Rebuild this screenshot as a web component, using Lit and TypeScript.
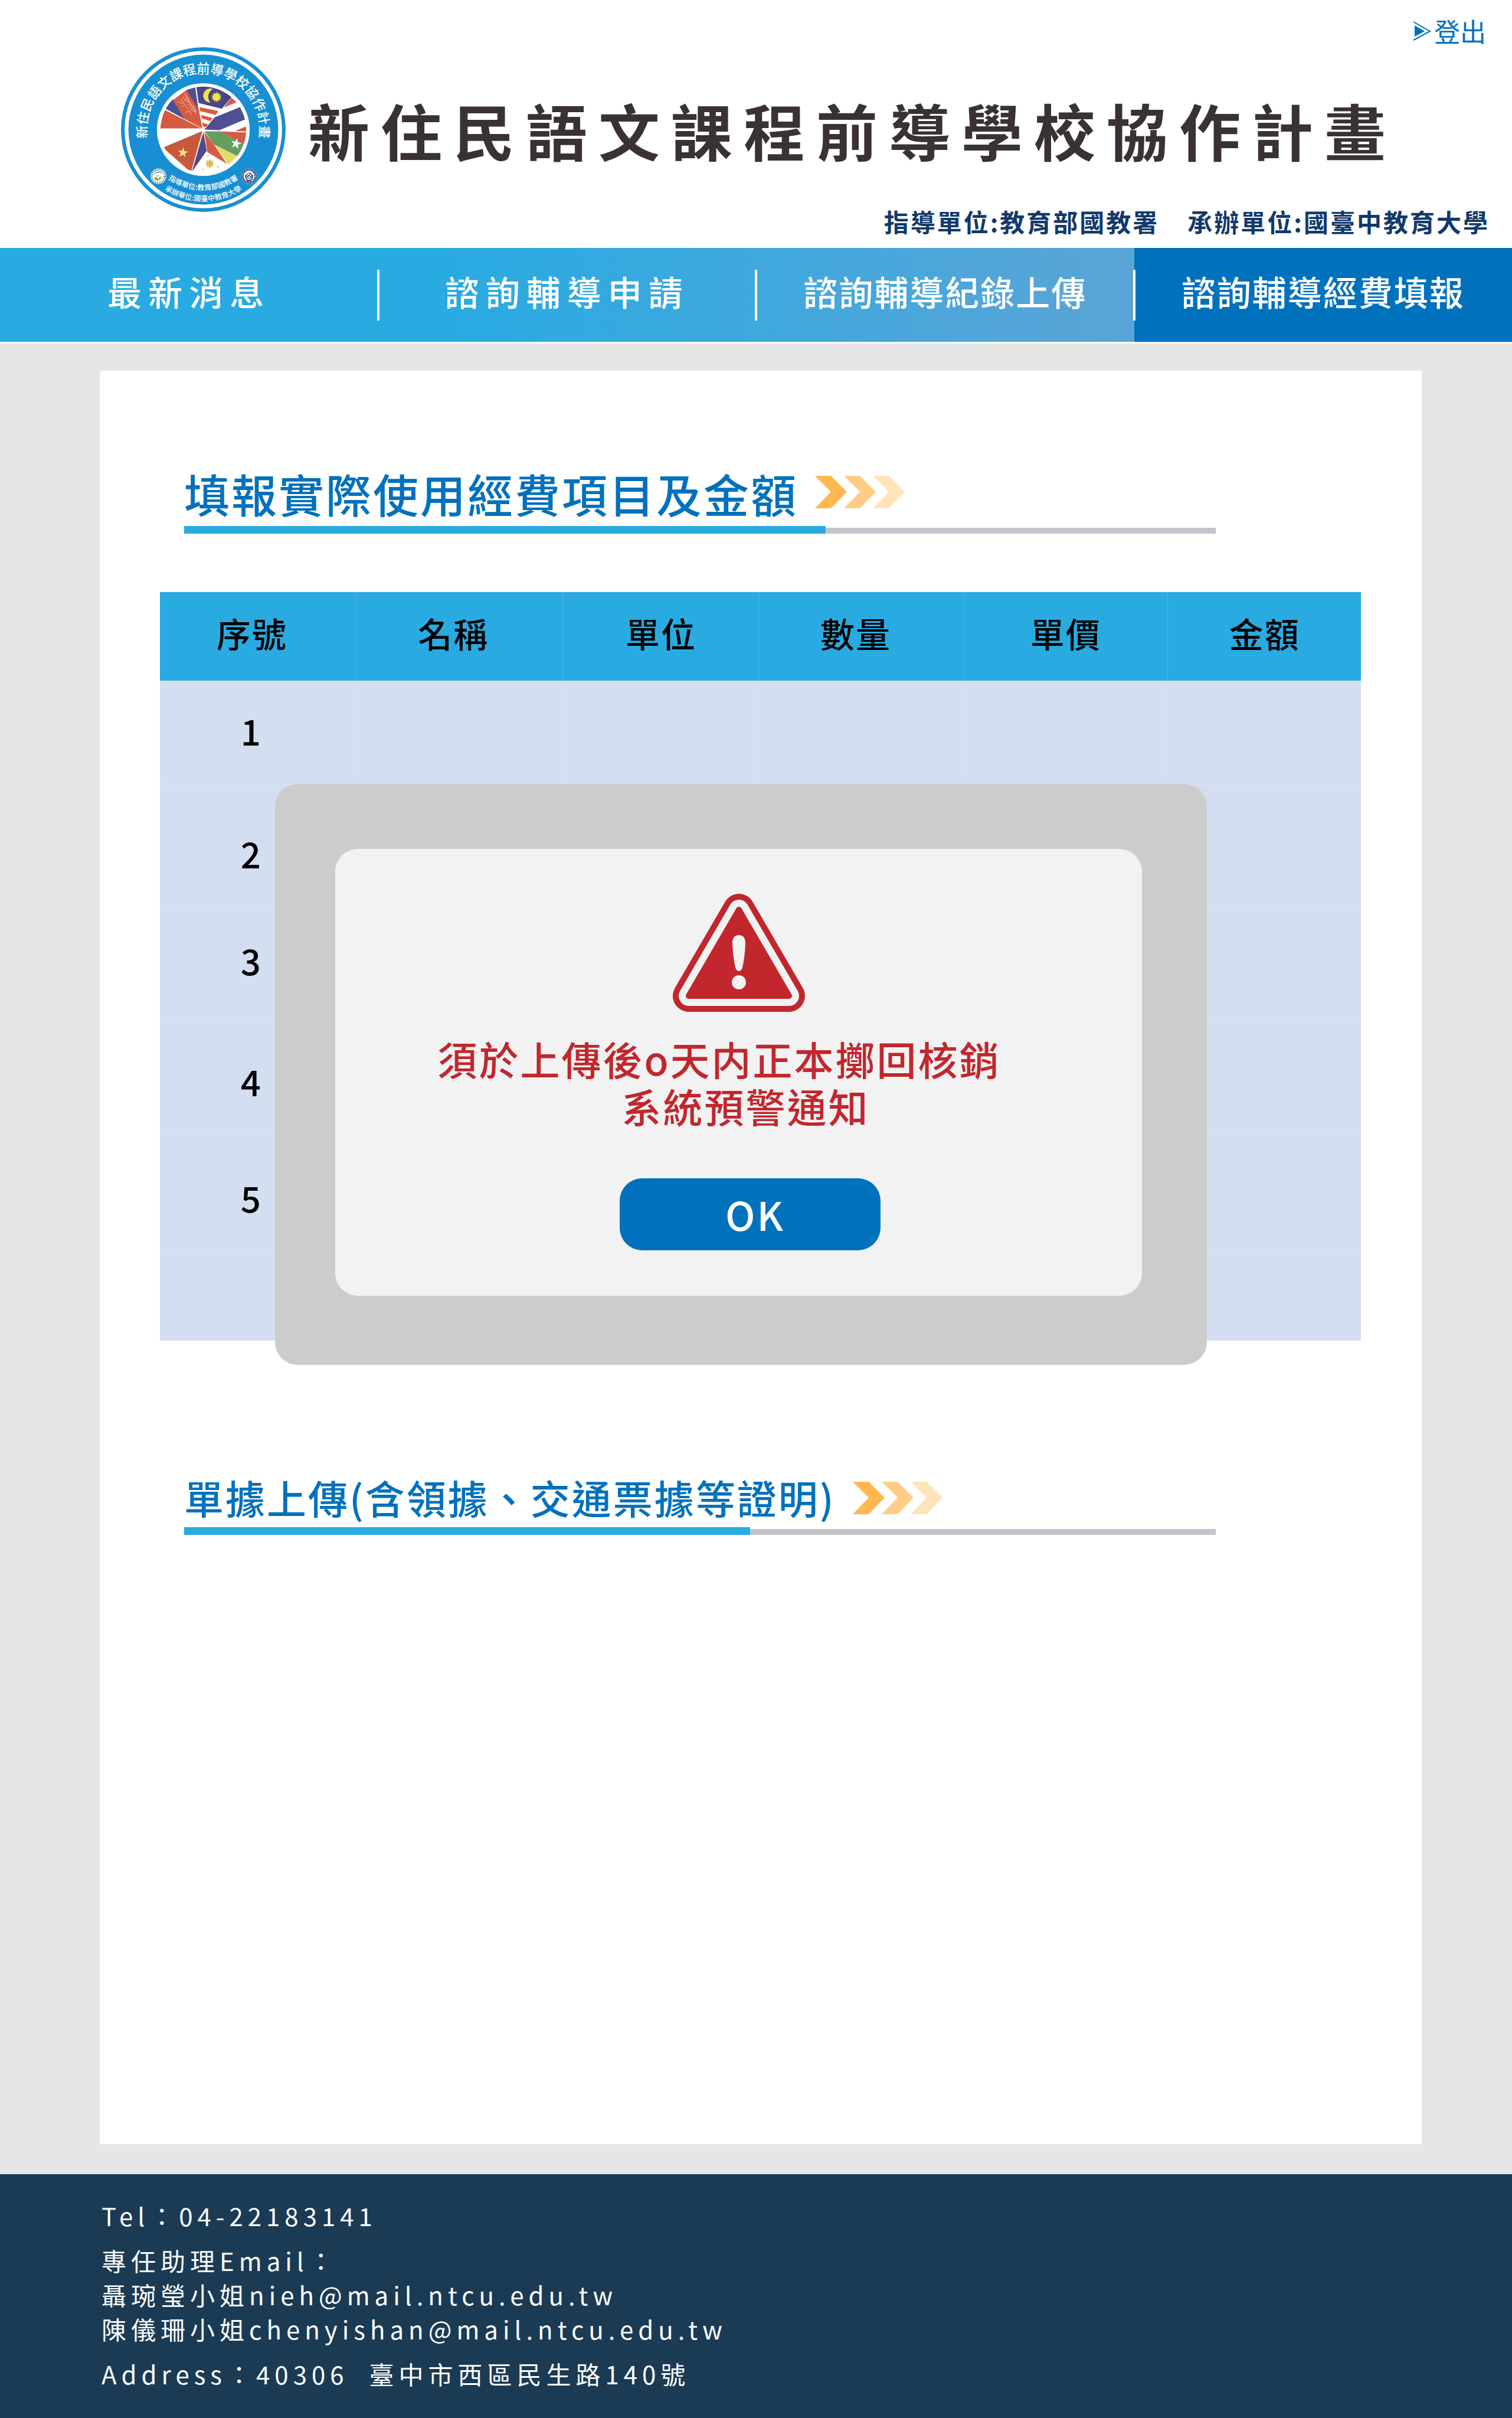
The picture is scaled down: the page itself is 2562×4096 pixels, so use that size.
import { LitElement, html, svg, css, nothing } from "lit";
import { customElement, property, state } from "lit/decorators.js";
import { classMap } from "lit/directives/class-map.js";

interface NavItem {
  label: string;
  wide: boolean;
  active: boolean;
}

const NAV: NavItem[] = [
  { label: "最新消息", wide: true, active: false },
  { label: "諮詢輔導申請", wide: true, active: false },
  { label: "諮詢輔導紀錄上傳", wide: false, active: false },
  { label: "諮詢輔導經費填報", wide: false, active: true },
];

const COLUMNS = ["序號", "名稱", "單位", "數量", "單價", "金額"];
const ROWS = ["1", "2", "3", "4", "5", ""];

/** Points of a star polygon with alternating outer and inner radii. */
function star(cx: number, cy: number, outer: number, inner: number, tips: number, turn = 0): string {
  const pts: string[] = [];
  for (let i = 0; i < tips * 2; i++) {
    const r = i % 2 === 0 ? outer : inner;
    const a = ((turn - 90 + (i * 180) / tips) * Math.PI) / 180;
    pts.push(`${Math.round(cx + r * Math.cos(a))},${Math.round(cy + r * Math.sin(a))}`);
  }
  return pts.join(" ");
}

@customElement("project-emblem")
export class ProjectEmblem extends LitElement {
  static styles = css`
    :host {
      display: block;
    }
    svg {
      display: block;
      width: 100%;
      height: 100%;
    }
    text {
      font-family: "Noto Sans CJK TC", sans-serif;
      fill: #fff;
    }
    .ring-title {
      font-size: 86px;
      font-weight: 500;
    }
    .ring-note {
      font-size: 48px;
      font-weight: 500;
    }
  `;

  render() {
    return html`
      <svg viewBox="53 43 1090 1090" role="img" aria-label="計畫標誌">
        <defs>
          <clipPath id="disc"><circle cx="598" cy="588" r="284" /></clipPath>
          <path id="arc-top" d="M598 962 A374 374 0 0 1 598 214 A374 374 0 0 1 598 962" />
          <path id="arc-mid" d="M197 588 A401 401 0 0 0 999 588" />
          <path id="arc-low" d="M124 588 A474 474 0 0 0 1072 588" />
        </defs>
        <circle cx="598" cy="588" r="545" fill="#188fd2" />
        <circle cx="598" cy="588" r="521" fill="#fff" />
        <circle cx="598" cy="588" r="496" fill="#188fd2" />
        <circle cx="598" cy="588" r="307" fill="#fff" />
        <g clip-path="url(#disc)">
          <polygon points="340,445 395,380 476,520" fill="#4f5094" />
          <polygon points="397,393 487,325 568,455 592,580 476,520" fill="#d55b42" />
          <polygon points="485,325 543,300 566,455" fill="#504f92" />
          <g stroke="#f0b3aa" stroke-width="6" fill="none" stroke-dasharray="9 3">
            <path d="M474 348 L552 478" />
            <path d="M483 358 L508 408" />
            <path d="M462 376 L505 396 M470 392 L508 410 M500 422 L545 440 M508 440 L552 458 M514 456 L552 474" />
            <path d="M450 385 L520 488" stroke-width="4" />
            <path d="M430 402 L468 418 M452 436 L488 424 M478 474 L512 466" stroke-width="4" />
          </g>
          <polygon points="550,290 640,290 790,368 720,450 567,412" fill="#494587" />
          <path d="M661 319 A47 47 0 1 0 645 410 A60 60 0 0 1 661 319" fill="#f2e24b" />
          <polygon points=${star(685, 373, 36, 22, 14)} fill="#f2e24b" />
          <g fill="#d55b42">
            <polygon points="573,440 697,466 680,491 578,466" />
            <polygon points="583,491 661,512 643,531 588,515" />
            <polygon points="590,541 630,554 614,572 596,568" />
            <polygon points="784,378 820,406 733,442" />
            <polygon points="890,563 890,601 810,597" />
          </g>
          <polygon points="850,436 880,519 705,592 605,588 673,507" fill="#4f5094" />
          <polygon points="705,600 890,608 880,692" fill="#d55b42" />
          <polygon points="607,600 705,600 890,696 840,773 668,687" fill="#649e5f" />
          <polygon points="670,686 835,770 768,825" fill="#e4dc6a" />
          <polygon points=${star(815, 681, 38, 14, 5, 12)} fill="#fff" />
          <polygon points="598,605 621,728 522,868" fill="#524a88" />
          <polygon points="604,603 672,692 754,815 625,737" fill="#d55b42" />
          <polygon points=${star(640, 814, 32, 19, 8)} fill="#e0bf52" />
          <polygon points=${star(628, 761, 9, 4, 5)} fill="#e0bf52" />
          <polygon points=${star(694, 836, 9, 4, 5, 20)} fill="#e0bf52" />
          <polygon points=${star(594, 853, 9, 4, 5)} fill="#e0bf52" />
          <polygon points="592,598 516,870 330,707" fill="#c9593b" />
          <polygon points=${star(463, 741, 36, 14, 5, 6)} fill="#f8e583" />
          <polygon points="338,455 585,580 310,580" fill="#d55b42" />
        </g>
        <text class="ring-title" text-anchor="middle">
          <textPath href="#arc-top" startOffset="50%">新住民語文課程前導學校協作計畫</textPath>
        </text>
        <text class="ring-note" text-anchor="middle">
          <textPath href="#arc-mid" startOffset="50%">指導單位:教育部國教署</textPath>
        </text>
        <text class="ring-note" text-anchor="middle">
          <textPath href="#arc-low" startOffset="50%">承辦單位:國臺中教育大學</textPath>
        </text>
        <circle cx="301" cy="897" r="51" fill="#fff" />
        <circle cx="301" cy="897" r="43" fill="none" stroke="#3c4a3c" stroke-width="9" stroke-dasharray="5 7" />
        <path d="M270 893 A32 32 0 0 1 330 884 A36 36 0 0 0 270 893" fill="#2c8fa3" />
        <path d="M334 893 A32 32 0 0 1 316 924 A44 44 0 0 0 334 893" fill="#2c8fa3" />
        <path d="M273 905 Q298 898 300 926 Q276 928 273 905 M303 925 Q298 905 318 899 Q322 918 303 925 M290 893 Q302 884 305 897 Q294 902 290 893" fill="#72b62b" />
        <circle cx="901" cy="897" r="52" fill="#fff" />
        <circle cx="901" cy="897" r="44" fill="none" stroke="#24477f" stroke-width="14" />
        <circle cx="901" cy="897" r="44" fill="none" stroke="#fff" stroke-width="6" stroke-dasharray="4 6" />
        <path d="M878 888 Q876 922 901 926 Q926 922 925 888" fill="none" stroke="#24477f" stroke-width="7" />
        <circle cx="902" cy="893" r="17" fill="none" stroke="#24477f" stroke-width="5" />
        <path d="M890 903 L912 880 M892 888 Q904 892 914 902 M888 928 L914 928" fill="none" stroke="#24477f" stroke-width="5" />
      </svg>
    `;
  }
}

@customElement("section-title")
export class SectionTitle extends LitElement {
  @property() text = "";
  @property() size: "large" | "medium" = "large";
  @property({ type: Number }) fill = 50;

  static styles = css`
    :host {
      display: block;
    }
    .line {
      display: flex;
      align-items: flex-start;
      gap: 29px;
    }
    .title {
      margin: 0;
      font-weight: 500;
      color: #0071bc;
      letter-spacing: 3px;
    }
    .large {
      font-size: 77px;
      line-height: 96px;
    }
    .medium {
      font-size: 67px;
      line-height: 88px;
    }
    .arrows {
      display: block;
      width: 152px;
      height: 55px;
      margin-top: 18px;
    }
    .rule {
      display: flex;
      align-items: flex-end;
      width: 88%;
      margin-top: 7px;
    }
    .done {
      height: 13px;
      background: #29abe2;
    }
    .rest {
      flex: 1;
      height: 10px;
      background: #c1c5ca;
    }
  `;

  render() {
    const tones = ["#ffb74f", "#ffcd86", "#ffe3ba"];
    return html`
      <div class="line">
        <h2 class=${classMap({ title: true, large: this.size === "large", medium: this.size === "medium" })}>${this.text}</h2>
        <svg class="arrows" viewBox="0 0 152 55" aria-hidden="true">
          ${tones.map((tone, i) => {
            const x = i * 49;
            return svg`<polygon points="${x},0 ${x + 27},0 ${x + 54},27 ${x + 27},55 ${x},55 ${x + 27},27" fill=${tone} />`;
          })}
        </svg>
      </div>
      <div class="rule">
        <div class="done" style="width: ${this.fill}%"></div>
        <div class="rest"></div>
      </div>
    `;
  }
}

@customElement("app-root")
export class AppRoot extends LitElement {
  @state() private alertOpen = true;

  static styles = css`
    :host {
      display: flex;
      flex-direction: column;
      min-height: 100vh;
      background: #fff;
      font-family: "Noto Sans CJK TC", sans-serif;
      font-weight: 500;
      color: #000;
    }
    a {
      color: inherit;
      text-decoration: none;
    }

    .account {
      display: flex;
      justify-content: flex-end;
      align-items: center;
      height: 80px;
      padding: 24px 44px 0 0;
      box-sizing: border-box;
    }
    .logout {
      display: flex;
      align-items: center;
      gap: 5px;
      font-size: 44px;
      font-weight: 400;
      line-height: 56px;
      color: #0071bc;
    }
    .logout-icon {
      display: block;
      width: 31px;
      height: 33px;
    }
    .brand {
      display: flex;
      align-items: center;
      gap: 38px;
      padding-left: 205px;
    }
    .emblem {
      flex: none;
      width: 279px;
      height: 279px;
    }
    .site-name {
      margin: 0;
      font-size: 104px;
      line-height: 128px;
      font-weight: 700;
      letter-spacing: 19px;
      white-space: nowrap;
      color: #3a3232;
    }
    .credits {
      display: flex;
      justify-content: flex-end;
      gap: 48px;
      padding: 0 38px 29px 0;
      font-size: 42px;
      line-height: 32px;
      font-weight: 700;
      letter-spacing: 3px;
      color: #12396a;
    }

    .nav {
      display: grid;
      grid-template-columns: repeat(4, 1fr);
      background: linear-gradient(90deg, #29abe2 0%, #29abe2 30%, #5ba4d7 75%);
      margin-bottom: 3px;
    }
    .nav-link {
      position: relative;
      display: flex;
      justify-content: center;
      align-items: center;
      height: 159px;
      padding-bottom: 14px;
      box-sizing: border-box;
      font-size: 58px;
      letter-spacing: 2px;
      color: #fff;
      white-space: nowrap;
    }
    .nav-link.wide {
      letter-spacing: 11px;
    }
    .nav-link.active {
      background: #0071bc;
    }
    .nav-link + .nav-link::before {
      content: "";
      position: absolute;
      left: -2px;
      top: 37px;
      width: 4px;
      height: 86px;
      background: #fff;
    }

    .main {
      flex: 1;
      display: flex;
      padding: 46px 153px 51px 169px;
      background: #e6e6e6;
    }
    .panel {
      flex: 1;
      min-width: 0;
      padding: 160px 103px 0 102px;
      background: #fff;
    }
    .heading {
      padding: 0 8px 0 41px;
    }
    .budget {
      position: relative;
      margin: 99px 0 221px;
    }
    .sheet {
      width: 100%;
      table-layout: fixed;
      border-spacing: 0;
      background: #d3def0;
    }
    .head-cell {
      height: 150px;
      padding: 0 0 12px;
      box-sizing: border-box;
      background: #29abe2;
      border-left: 1px solid #45b5e6;
      font-size: 58px;
      line-height: 80px;
      font-weight: 500;
      letter-spacing: 2px;
    }
    .head-cell.lead {
      padding-right: 20px;
    }
    .c1 {
      width: 16.3%;
    }
    .c2 {
      width: 17.2%;
    }
    .c3 {
      width: 16.4%;
    }
    .c4,
    .c5 {
      width: 17%;
    }
    .cell {
      height: 197px;
      padding: 0 0 8px;
      box-sizing: border-box;
      border-left: 1px solid #dae3f3;
      border-top: 1px solid #dae3f3;
      font-size: 60px;
      line-height: 80px;
      text-align: center;
    }
    .cell:first-child,
    .head-cell:first-child {
      border-left: 0;
    }
    .number {
      padding-right: 24px;
    }
    .r1 .cell {
      height: 175px;
    }
    .r2 .cell {
      height: 206px;
      padding-top: 34px;
    }
    .r3 .cell {
      height: 190px;
    }
    .r4 .cell,
    .r5 .cell {
      padding-top: 24px;
    }
    .r6 .cell {
      height: 153px;
    }

    .alert {
      position: absolute;
      left: 195px;
      right: 261px;
      top: 325px;
      padding: 110px 110px 117px 102px;
      border-radius: 38px;
      background: #ccc;
    }
    .alert-box {
      display: flex;
      flex-direction: column;
      align-items: center;
      padding: 76px 0 77px;
      border-radius: 38px;
      background: #f2f2f2;
    }
    .warning {
      display: block;
      width: 224px;
      height: 200px;
    }
    .message {
      margin: 39px 0 0;
      font-size: 67px;
      line-height: 80px;
      letter-spacing: 3px;
      color: #c1272d;
      text-align: center;
    }
    .message-line {
      display: block;
    }
    .message-line.first {
      padding-right: 66px;
    }
    .message-line.second {
      padding-left: 24px;
    }
    .ok {
      width: 442px;
      height: 122px;
      margin: 83px 0 0 38px;
      padding: 0 0 4px 18px;
      border: 0;
      border-radius: 38px;
      background: #0071bc;
      color: #fff;
      font-family: inherit;
      font-size: 67px;
      font-weight: 500;
      letter-spacing: 3px;
      cursor: pointer;
    }

    .footer {
      display: flex;
      flex-direction: column;
      gap: 18px;
      padding: 41px 172px 46px;
      background: #1b3a54;
      color: #fff;
      font-size: 42px;
      font-weight: 400;
      line-height: 58px;
      letter-spacing: 8px;
    }
    .footer-line {
      margin: 0;
      white-space: pre-wrap;
    }
  `;

  private closeAlert() {
    this.alertOpen = false;
  }

  private renderAlert() {
    return html`
      <div class="alert" role="alertdialog" aria-labelledby="alert-text">
        <div class="alert-box">
          <svg class="warning" viewBox="0 0 224 200" aria-hidden="true">
            <g stroke-linejoin="round">
              <polygon points="112,27 27,173 197,173" fill="#c1272d" stroke="#c1272d" stroke-width="54" />
              <polygon points="112,27 27,173 197,173" fill="#f2f2f2" stroke="#f2f2f2" stroke-width="34" />
              <polygon points="112,27 27,173 197,173" fill="#c1272d" stroke="#c1272d" stroke-width="10" />
            </g>
            <path d="M101 84 Q101 70 112 70 Q123 70 123 84 Q122 108 118 125 Q116 131 112 131 Q108 131 106 125 Q102 108 101 84 Z" fill="#f2f2f2" />
            <circle cx="112" cy="150" r="12" fill="#f2f2f2" />
          </svg>
          <p class="message" id="alert-text">
            <span class="message-line first">須於上傳後o天内正本擲回核銷</span>
            <span class="message-line second">系統預警通知</span>
          </p>
          <button class="ok" type="button" @click=${this.closeAlert}>OK</button>
        </div>
      </div>
    `;
  }

  render() {
    return html`
      <header>
        <div class="account">
          <a class="logout" href="#logout">
            <svg class="logout-icon" viewBox="0 0 31 33" aria-hidden="true">
              <path d="M1 1 L29 17 L1 32" fill="none" stroke="#0071bc" stroke-width="2" />
              <polygon points="3,7 20,17 3,26" fill="#0071bc" />
            </svg>
            登出
          </a>
        </div>
        <div class="brand">
          <project-emblem class="emblem"></project-emblem>
          <h1 class="site-name">新住民語文課程前導學校協作計畫</h1>
        </div>
        <div class="credits">
          <span>指導單位:教育部國教署</span>
          <span>承辦單位:國臺中教育大學</span>
        </div>
      </header>
      <nav class="nav">
        ${NAV.map(
          (item, i) => html`
            <a class=${classMap({ "nav-link": true, wide: item.wide, active: item.active })} href="#page-${i + 1}">${item.label}</a>
          `
        )}
      </nav>
      <main class="main">
        <div class="panel">
          <section-title class="heading" text="填報實際使用經費項目及金額" size="large" fill="62.2"></section-title>
          <div class="budget">
            <table class="sheet">
              <thead>
                <tr>
                  ${COLUMNS.map(
                    (name, i) => html`
                      <th scope="col" class="head-cell c${i + 1} ${[0, 1, 3].includes(i) ? "lead" : ""}">${name}</th>
                    `
                  )}
                </tr>
              </thead>
              <tbody>
                ${ROWS.map(
                  (row, i) => html`
                    <tr class="r${i + 1}">
                      ${COLUMNS.map((_, c) => html`<td class="cell ${c === 0 ? "number" : ""}">${c === 0 ? row : nothing}</td>`)}
                    </tr>
                  `
                )}
              </tbody>
            </table>
            ${this.alertOpen ? this.renderAlert() : nothing}
          </div>
          <section-title class="heading" text="單據上傳(含領據、交通票據等證明)" size="medium" fill="54.9"></section-title>
        </div>
      </main>
      <footer class="footer">
        <p class="footer-line">Tel：04-22183141</p>
        <div>
          <p class="footer-line">專任助理Email：</p>
          <p class="footer-line">聶琬瑩小姐<a href="mailto:nieh@mail.ntcu.edu.tw">nieh@mail.ntcu.edu.tw</a></p>
          <p class="footer-line">陳儀珊小姐<a href="mailto:chenyishan@mail.ntcu.edu.tw">chenyishan@mail.ntcu.edu.tw</a></p>
        </div>
        <p class="footer-line">Address：40306  臺中市西區民生路140號</p>
      </footer>
    `;
  }
}
